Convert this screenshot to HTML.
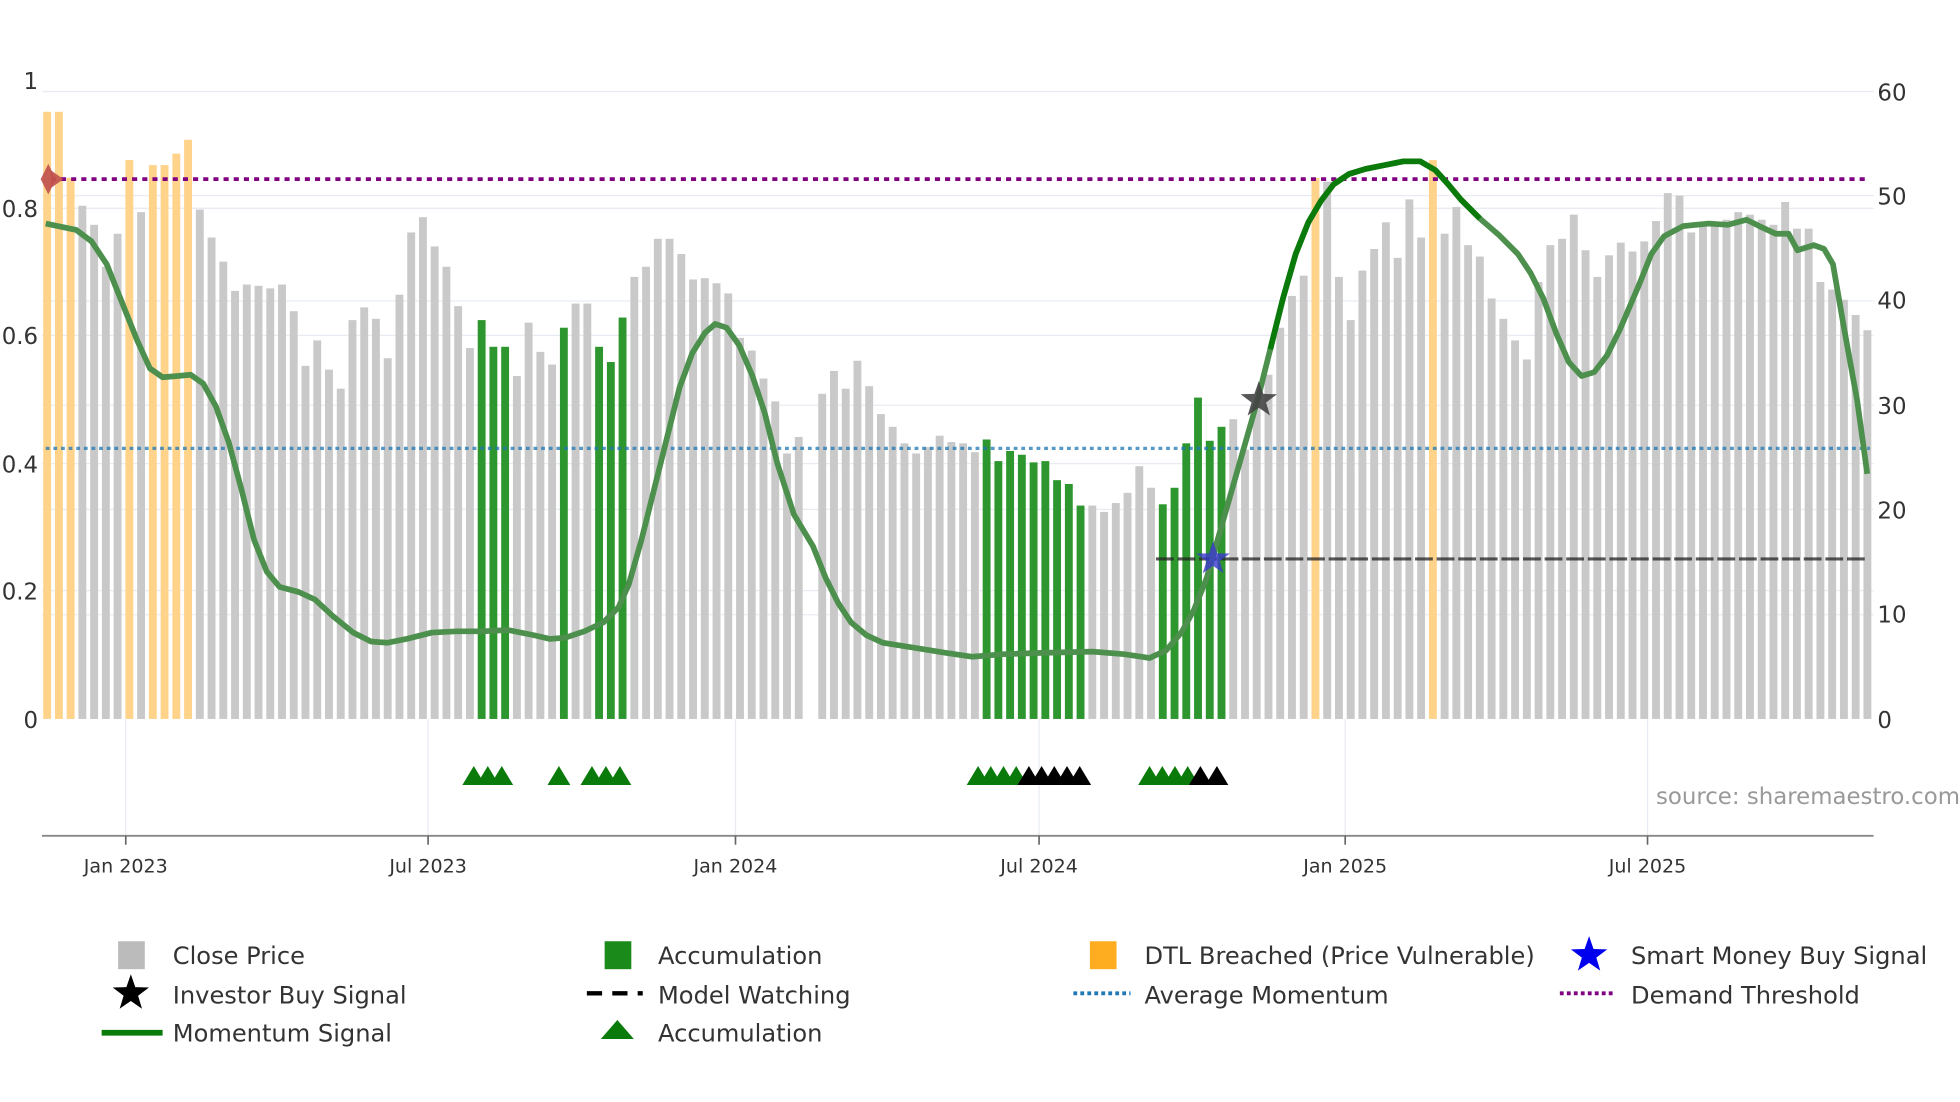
<!DOCTYPE html>
<html><head><meta charset="utf-8">
<style>
html,body{margin:0;padding:0;background:#fff;}
svg{display:block;}
text{font-family:"DejaVu Sans","Liberation Sans",sans-serif;}
</style></head>
<body>
<svg id="s" width="1960" height="1102" viewBox="0 0 1543 867.55" xmlns="http://www.w3.org/2000/svg">
<rect width="1543" height="868" fill="#fff"/>
<!-- grid -->
<g stroke="#e8ecf2" stroke-width="1">
<line x1="33" x2="1475" y1="72" y2="72"/>
<line x1="33" x2="1475" y1="164" y2="164"/>
<line x1="33" x2="1475" y1="264" y2="264"/>
<line x1="33" x2="1475" y1="365" y2="365"/>
<line x1="33" x2="1475" y1="465" y2="465"/>
<line x1="33" x2="1475" y1="154" y2="154"/>
<line x1="33" x2="1475" y1="237" y2="237"/>
<line x1="33" x2="1475" y1="319" y2="319"/>
<line x1="33" x2="1475" y1="401" y2="401"/>
<line x1="33" x2="1475" y1="484" y2="484"/>
<line x1="99" x2="99" y1="566" y2="658"/>
<line x1="337" x2="337" y1="566" y2="658"/>
<line x1="579" x2="579" y1="566" y2="658"/>
<line x1="818" x2="818" y1="566" y2="658"/>
<line x1="1059" x2="1059" y1="566" y2="658"/>
<line x1="1297" x2="1297" y1="566" y2="658"/>
</g>
<g id="bars"></g>
<!-- lines -->
<line x1="36" x2="1472" y1="353" y2="353" stroke="#1f77b4" stroke-width="2.5" stroke-dasharray="3 3" opacity="0.75"/>
<line x1="40" x2="1472" y1="141" y2="141" stroke="#800080" stroke-width="3" stroke-dasharray="4 4"/>
<line x1="910" x2="1470" y1="440" y2="440" stroke="#222" stroke-width="2.5" stroke-dasharray="14 3" opacity="0.75"/>
<polyline id="mom" fill="none" stroke="#4d8f4d" stroke-width="4.5" stroke-linejoin="round" points=""/>
<polyline id="momd" fill="none" stroke="#0a7a0a" stroke-width="4.5" stroke-linejoin="round" points=""/>
<!-- red diamond -->
<polygon points="38,129 44,141 38,153 32,141" fill="#c0504d" opacity="0.9"/>
<polygon points="40,134 50,141 40,148" fill="#c0504d" opacity="0.9"/>
<!-- stars -->
<polygon id="st1" fill="#444" opacity="0.9" points=""/>
<polygon id="st2" fill="#3a3acc" opacity="0.8" points=""/>
<g id="tri"></g>
<!-- axis -->
<line x1="33" x2="1475" y1="658" y2="658" stroke="#888" stroke-width="1.5"/>
<g stroke="#666" stroke-width="1.3">
<line x1="99" x2="99" y1="658" y2="665"/><line x1="337" x2="337" y1="658" y2="665"/>
<line x1="579" x2="579" y1="658" y2="665"/><line x1="818" x2="818" y1="658" y2="665"/>
<line x1="1059" x2="1059" y1="658" y2="665"/><line x1="1297" x2="1297" y1="658" y2="665"/>
</g>
<g font-size="15" fill="#333" text-anchor="middle">
<text x="99" y="687">Jan 2023</text><text x="337" y="687">Jul 2023</text>
<text x="579" y="687">Jan 2024</text><text x="818" y="687">Jul 2024</text>
<text x="1059" y="687">Jan 2025</text><text x="1297" y="687">Jul 2025</text>
</g>
<g font-size="18" fill="#333" text-anchor="end">
<text x="30" y="70">1</text><text x="30" y="171">0.8</text><text x="30" y="271">0.6</text>
<text x="30" y="372">0.4</text><text x="30" y="472">0.2</text><text x="30" y="573">0</text>
</g>
<g font-size="18" fill="#333">
<text x="1478" y="79">60</text><text x="1478" y="161">50</text><text x="1478" y="243">40</text>
<text x="1478" y="326">30</text><text x="1478" y="408">20</text><text x="1478" y="490">10</text><text x="1478" y="573">0</text>
</g>
<text x="1543" y="633" font-size="18" fill="#999" text-anchor="end">source: sharemaestro.com</text>
<!-- legend -->
<g font-size="19" fill="#333">
<rect x="93" y="741" width="21" height="22" fill="#bbb"/><text x="136" y="759">Close Price</text>
<rect x="476" y="741" width="21" height="22" fill="#1a8a1a"/><text x="518" y="759">Accumulation</text>
<rect x="858" y="741" width="21" height="22" fill="#ffad20"/><text x="901" y="759">DTL Breached (Price Vulnerable)</text>
<polygon id="lst1" fill="#0000ee" points=""/><text x="1284" y="759">Smart Money Buy Signal</text>
<polygon id="lst2" fill="#000" points=""/><text x="136" y="790">Investor Buy Signal</text>
<line x1="462" x2="506" y1="782" y2="782" stroke="#000" stroke-width="3.5" stroke-dasharray="12 8"/><text x="518" y="790">Model Watching</text>
<line x1="845" x2="890" y1="782" y2="782" stroke="#1f77b4" stroke-width="3" stroke-dasharray="3 2.5"/><text x="901" y="790">Average Momentum</text>
<line x1="1228" x2="1272" y1="782" y2="782" stroke="#800080" stroke-width="3" stroke-dasharray="3 2.5"/><text x="1284" y="790">Demand Threshold</text>
<line x1="80" x2="128" y1="813" y2="813" stroke="#0a7a0a" stroke-width="4.5"/><text x="136" y="820">Momentum Signal</text>
<polygon points="486,803 499,818 473,818" fill="#0a7a0a"/><text x="518" y="820">Accumulation</text>
</g>
</svg>
<script>
(function(){
var NS="http://www.w3.org/2000/svg";
var tops=[88,88,140,162,177,210,184,126,167,130,130,121,110,165,187,206,229,224,225,227,224,245,288,268,291,306,252,242,251,282,232,183,171,194,210,241,274,252,273,273,296,254,277,287,258,239,239,273,285,250,218,210,188,188,200,220,219,223,231,266,276,298,316,357,344,null,310,292,306,284,304,326,336,349,357,352,343,348,349,356,346,363,355,358,364,363,378,381,398,398,403,396,388,367,384,397,384,349,313,347,336,330,354,320,295,258,233,217,140,143,218,252,213,196,175,203,157,187,126,184,163,193,202,235,251,268,283,222,193,188,169,197,218,201,191,198,190,174,152,154,183,177,176,173,167,169,173,177,159,180,180,222,228,236,248,260];
var orange=[0,1,2,7,9,10,11,12,108,118];
var green=[37,38,39,44,47,48,49,80,81,82,83,84,85,86,87,88,95,96,97,98,99,100];
var g=document.getElementById("bars");
var n=tops.length, x0=34, dx=(1470-37)/(n-1);
for(var i=0;i<n;i++){if(tops[i]===null)continue;
var r=document.createElementNS(NS,"rect");
var x=x0+i*dx;
r.setAttribute("x",x.toFixed(2));r.setAttribute("width","6.2");
r.setAttribute("y",tops[i]);r.setAttribute("height",566-tops[i]);
var c="#c9c9c9";
if(orange.indexOf(i)>=0)c="#ffd38a";
if(green.indexOf(i)>=0)c="#2e962e";
r.setAttribute("fill",c);g.appendChild(r);}
var pts=[[36,176],[60,181],[72,190],[84,208],[96,238],[108,268],[118,290],[128,297],[140,296],[150,295],[160,302],[170,320],[180,348],[190,385],[200,425],[210,450],[220,462],[235,466],[248,472],[262,485],[278,498],[292,505],[305,506],[320,503],[340,498],[360,497],[380,497],[400,496],[420,500],[433,503],[445,502],[460,497],[475,490],[487,478],[495,460],[505,425],[515,385],[525,345],[535,305],[545,278],[555,262],[563,255],[572,258],[582,272],[592,295],[602,325],[612,365],[625,405],[640,430],[650,455],[660,475],[670,490],[682,500],[695,506],[720,510],[745,514],[765,517],[790,515],[820,514],[860,513],[885,515],[905,518],[918,512],[930,498],[940,480],[950,455],[960,420],[970,385],[980,350],[990,315],[1000,275],[1010,235],[1020,200],[1030,175],[1040,158],[1050,145],[1062,137],[1075,133],[1090,130],[1105,127],[1118,127],[1130,134],[1140,145],[1150,157],[1165,172],[1180,185],[1195,200],[1205,215],[1215,235],[1225,262],[1235,285],[1245,296],[1255,293],[1265,280],[1275,260],[1290,225],[1300,200],[1310,186],[1325,178],[1345,176],[1360,177],[1375,173],[1385,178],[1398,184],[1408,184],[1415,197],[1428,193],[1436,196],[1443,208],[1452,260],[1462,315],[1470,373]];
document.getElementById("mom").setAttribute("points",pts.map(function(p){return p.join(",")}).join(" "));
document.getElementById("momd").setAttribute("points",pts.filter(function(p){return p[0]>=1000&&p[0]<=1165}).map(function(p){return p.join(",")}).join(" "));
function star(cx,cy,R,r){var a=[];for(var k=0;k<10;k++){var ang=-Math.PI/2+k*Math.PI/5;var rr=k%2?r:R;a.push((cx+rr*Math.cos(ang)).toFixed(1)+","+(cy+rr*Math.sin(ang)).toFixed(1));}return a.join(" ");}
document.getElementById("st1").setAttribute("points",star(991,315,15,6));
document.getElementById("st2").setAttribute("points",star(955,440,14,5.5));
document.getElementById("lst1").setAttribute("points",star(1251,752,15,6));
document.getElementById("lst2").setAttribute("points",star(103,782,15,6));
var tg=document.getElementById("tri");
var gt=[373,384,395,440,466,477,488,770,780,790,800,905,915,925,935];
var bt=[810,820,830,840,850,945,958];
function tri(x,col){var p=document.createElementNS(NS,"polygon");p.setAttribute("points",(x)+",603 "+(x+9)+",618 "+(x-9)+",618");p.setAttribute("fill",col);tg.appendChild(p);}
gt.forEach(function(x){tri(x,"#0a7a0a")});bt.forEach(function(x){tri(x,"#000")});
})();
</script>
</body></html>
